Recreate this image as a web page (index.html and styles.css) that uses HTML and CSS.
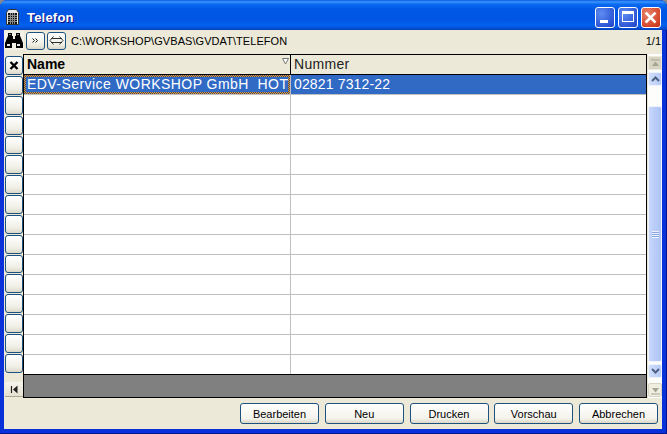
FILE: index.html
```html
<!DOCTYPE html>
<html lang="de">
<head>
<meta charset="utf-8">
<title>Telefon</title>
<link rel="stylesheet" href="styles.css">
</head>
<body>
<div class="window">
  <header class="titlebar">
    <svg class="app-icon" width="13" height="16" viewBox="0 0 13 16"><path d="M0.500 3.500L2.500 0.500h8l2 3v12h-12z" fill="#e8e8e8" stroke="#333"/><rect x="2" y="4" width="9" height="11" fill="#111"/><path d="M4.500 4v11M6.500 4v11M8.500 4v11M2 6.500h9M2 8.500h9M2 10.500h9M2 12.500h9" stroke="#8a8a8a"/></svg>
    <span class="title">Telefon</span>
    <div class="caption-buttons">
      <div class="cap cap-blue cap-min"><span class="min-glyph"></span></div>
      <div class="cap cap-blue"><span class="max-glyph"></span></div>
      <div class="cap cap-red"><svg width="20" height="20" viewBox="0 0 20 20"><path d="M5 5l9 9M14 5l-9 9" stroke="#fff" stroke-width="2.800" stroke-linecap="square"/></svg></div>
    </div>
  </header>
  <div class="client">
    <div class="toolbar">
      <div class="find-btn"><svg width="18" height="15" viewBox="0 0 18 15"><path d="M3 0h4v3h1v3h2V3h1V0h4v3l1 2 2 5v5h-7v-5H7v5H0v-5l2-5 1-2z" fill="#000"/><rect x="2" y="11" width="3" height="2" fill="#e8e8e8"/><rect x="12" y="11" width="3" height="2" fill="#e8e8e8"/><rect x="4" y="1" width="2" height="1" fill="#888"/><rect x="12" y="1" width="2" height="1" fill="#888"/></svg></div>
      <div class="tool-btn"><svg width="9" height="9" viewBox="0 0 9 9"><path d="M1.500 2.500l2 2-2 2M4.500 2.500l2 2-2 2" fill="none" stroke="#111"/></svg></div>
      <div class="tool-btn"><svg width="15" height="11" viewBox="0 0 15 11"><path d="M2 3.500h11M2 7.500h11M4.500 1.500L1 5.500l3.500 4M10.500 1.500L14 5.500l-3.500 4" fill="none" stroke="#333"/></svg></div>
      <span class="path">C:\WORKSHOP\GVBAS\GVDAT\TELEFON</span>
      <span class="count">1/1</span>
    </div>
    <div class="main">
      <div class="selectors">
        <div class="sel"><svg width="16" height="17" viewBox="0 0 16 17"><path d="M4.500 5l7 7M11.500 5l-7 7" stroke="#000" stroke-width="2.400"/></svg></div>
        <div class="sel"></div><div class="sel"></div><div class="sel"></div><div class="sel"></div>
        <div class="sel"></div><div class="sel"></div><div class="sel"></div><div class="sel"></div>
        <div class="sel"></div><div class="sel"></div><div class="sel"></div><div class="sel"></div>
        <div class="sel"></div><div class="sel"></div><div class="sel"></div>
        <div class="first-btn"><svg width="9" height="9" viewBox="0 0 9 9"><path d="M1.500 1v7" stroke="#222" stroke-width="1.200"/><path d="M7.500 0.500v8L3 4.500z" fill="#222"/></svg></div>
      </div>
      <div class="grid">
        <div class="grid-head">
          <div class="head-name">Name<svg class="sort" width="7" height="7" viewBox="0 0 7 7"><path d="M0.500 0.500h6L3.500 6z" fill="#fff" stroke="#777"/></svg></div>
          <div class="head-num">Nummer</div>
        </div>
        <div class="row row-sel"><div class="cell-name"><div class="focus"><div class="focus-inner">EDV-Service WORKSHOP GmbH&nbsp; HOT</div></div></div><div class="cell-num">02821 7312-22</div></div>
        <div class="row"><div class="cell-name"></div><div class="cell-num"></div></div>
        <div class="row"><div class="cell-name"></div><div class="cell-num"></div></div>
        <div class="row"><div class="cell-name"></div><div class="cell-num"></div></div>
        <div class="row"><div class="cell-name"></div><div class="cell-num"></div></div>
        <div class="row"><div class="cell-name"></div><div class="cell-num"></div></div>
        <div class="row"><div class="cell-name"></div><div class="cell-num"></div></div>
        <div class="row"><div class="cell-name"></div><div class="cell-num"></div></div>
        <div class="row"><div class="cell-name"></div><div class="cell-num"></div></div>
        <div class="row"><div class="cell-name"></div><div class="cell-num"></div></div>
        <div class="row"><div class="cell-name"></div><div class="cell-num"></div></div>
        <div class="row"><div class="cell-name"></div><div class="cell-num"></div></div>
        <div class="row"><div class="cell-name"></div><div class="cell-num"></div></div>
        <div class="row"><div class="cell-name"></div><div class="cell-num"></div></div>
        <div class="row row-last"><div class="cell-name"></div><div class="cell-num"></div></div>
        <div class="grid-empty"></div>
      </div>
      <div class="scrollbar">
        <div class="sb-end"><svg width="9" height="9" viewBox="0 0 9 9"><path d="M0 1h9" stroke="#a5a593"/><path d="M4.500 2.500L8 7H1z" fill="#a5a593"/></svg></div>
        <div class="sb-arrow"><svg width="9" height="6" viewBox="0 0 9 6"><path d="M1 5l3.500-3.500L8 5" fill="none" stroke="#4d6185" stroke-width="2"/></svg></div>
        <div class="sb-gap"></div>
        <div class="sb-thumb"><span class="grip"></span></div>
        <div class="sb-arrow"><svg width="9" height="6" viewBox="0 0 9 6"><path d="M1 1l3.500 3.500L8 1" fill="none" stroke="#4d6185" stroke-width="2"/></svg></div>
        <div class="sb-end sb-end-low"><svg width="9" height="9" viewBox="0 0 9 9"><path d="M4.500 6.500L8 2H1z" fill="#a5a593"/><path d="M0 8h9" stroke="#a5a593"/></svg></div>
      </div>
    </div>
    <footer class="footer">
      <button class="btn">Bearbeiten</button>
      <button class="btn">Neu</button>
      <button class="btn">Drucken</button>
      <button class="btn">Vorschau</button>
      <button class="btn">Abbrechen</button>
    </footer>
  </div>
</div>
</body>
</html>
```

FILE: styles.css
```css
* { box-sizing: border-box; }
html, body { margin: 0; padding: 0; }
body {
  width: 667px;
  height: 434px;
  overflow: hidden;
  background: #8a8a8a;
  font-family: "Liberation Sans", Arial, sans-serif;
}
.window {
  width: 667px;
  height: 434px;
  display: flex;
  flex-direction: column;
  background: #0831d9;
  padding: 0 5px 5px 4px;
  border-radius: 7px 7px 0 0;
  box-shadow: inset -1px -1px 0 #00138c;
}
.titlebar {
  flex: 0 0 30px;
  margin: 0 -5px 0 -4px;
  padding: 4px 6px 0 6px;
  display: flex;
  align-items: center;
  border-radius: 7px 7px 0 0;
  background: linear-gradient(180deg, #0a5ce0 0, #3d95ff 2px, #0a6cf0 4px, #0058e6 9px, #0055e5 20px, #0262ee 25px, #0551d8 28px, #013fb5 30px);
}
.app-icon { margin-right: 8px; flex: none; }
.title {
  color: #fff;
  font-weight: 700;
  font-size: 13px;
  text-shadow: 1px 1px 0 #0f1089;
  letter-spacing: 0.2px;
}
.caption-buttons { margin-left: auto; display: flex; gap: 3px; }
.cap {
  width: 20px;
  height: 21px;
  border: 1px solid #fff;
  border-radius: 3px;
  display: flex;
}
.cap-min { margin-right: 0; }
.cap-blue { background: radial-gradient(circle at 30% 30%, #5f8cf0, #2a53d4 75%, #2043be); }
.cap-red { background: radial-gradient(circle at 30% 30%, #e8846a, #d5462a 70%, #b5321c); }
.min-glyph { width: 8px; height: 3px; background: #fff; margin: 12px 0 0 4px; }
.max-glyph { width: 12px; height: 11px; border: 1px solid #fff; border-top-width: 3px; margin: 3px 0 0 3px; }
.client {
  flex: 1;
  background: #ece9d8;
  display: flex;
  flex-direction: column;
  min-height: 0;
}
.toolbar {
  flex: 0 0 24px;
  display: flex;
  align-items: center;
  padding-bottom: 3px;
  font-size: 11px;
  color: #000;
}
.find-btn {
  width: 20px;
  height: 19px;
  margin-right: 2px;
  display: flex;
  align-items: center;
  justify-content: center;
  background: #f3f1e6;
}
.tool-btn {
  width: 19px;
  height: 18px;
  margin-right: 2px;
  border: 1px solid #1c5180;
  border-radius: 3px;
  background: linear-gradient(180deg, #fff, #f0efe6 70%, #dcd8c8);
  display: flex;
  align-items: center;
  justify-content: center;
}
.path { margin-left: 3px; letter-spacing: 0.06px; }
.count { margin-left: auto; margin-right: 1px; }
.main { flex: 0 0 344px; display: flex; }
.selectors { flex: 0 0 19px; display: flex; flex-direction: column; padding: 2px 0 1px 1px; }
.sel {
  flex: 0 0 18.85px;
  width: 18px;
  margin-bottom: 1px;
  border: 1px solid #1c5180;
  border-radius: 3px;
  background: linear-gradient(180deg, #fff, #f0efe6 70%, #dcd8c8);
  display: flex;
}
.first-btn {
  width: 18px;
  height: 15px;
  margin-top: auto;
  background: linear-gradient(180deg, #f6f5ee, #e4e1d0);
  border-bottom: 1px solid #aca899;
  display: flex;
  align-items: center;
  justify-content: center;
}
.grid {
  flex: 0 0 624px;
  border: 1px solid #000;
  display: flex;
  flex-direction: column;
  background: #808080;
}
.grid-head { flex: 0 0 20px; display: flex; background: #ece9d8; border-bottom: 1px solid #000; font-size: 14px; line-height: 19px; }
.head-name {
  flex: 0 0 267px;
  padding-left: 3px;
  font-weight: 700;
  border-right: 1px solid #000;
  position: relative;
}
.sort { position: absolute; right: 1px; top: 3px; }
.head-num { padding-left: 3px; flex: 1; color: #222; letter-spacing: 0.3px; }
.row { flex: 0 0 20px; display: flex; background: #fff; border-bottom: 1px solid #c0c0c0; font-size: 14px; line-height: 19px; }
.row-last { border-bottom-color: #000; }
.row-sel { background: #316ac5; color: #fff; }
.cell-name { flex: 0 0 267px; border-right: 1px solid #c0c0c0; overflow: hidden; white-space: nowrap; }
.focus {
  height: 19px;
  width: 266px;
  padding: 2px;
  background: repeating-conic-gradient(#f09a30 0 25%, #3a4a6a 0 50%) 0 0 / 2px 2px;
}
.focus-inner {
  height: 15px;
  padding-left: 1px;
  background: #316ac5;
  line-height: 15px;
  letter-spacing: 0.45px;
  overflow: hidden;
}
.cell-num { flex: 1; padding-left: 3px; letter-spacing: 0.15px; }
.grid-empty { flex: 1; background: #808080; }
.scrollbar { flex: 0 0 14px; margin-left: 1px; display: flex; flex-direction: column; background: #fdfdfb; padding-bottom: 1px; }
.sb-end {
  flex: 0 0 14px;
  margin-top: 2px;
  background: #d8d4c4;
  border: 1px solid #ece9d8;
  display: flex;
  align-items: center;
  justify-content: center;
}
.sb-end-low { margin-top: 5px; background: #f0eee0; border: 1px solid #d8d4c4; border-radius: 2px; }
.sb-arrow {
  flex: 0 0 14px;
  margin-top: 2px;
  background: linear-gradient(90deg, #d2defb, #b7cbf7);
  border: 1px solid #eef2fd;
  border-radius: 2px;
  display: flex;
  align-items: center;
  justify-content: center;
}
.sb-gap { flex: 0 0 20px; }
.sb-thumb {
  flex: 1;
  background: linear-gradient(90deg, #c9d8fb, #b9ccf8 50%, #aec3f5);
  border: 1px solid #eef2fd;
  border-radius: 2px;
  display: flex;
  align-items: center;
  justify-content: center;
}
.grip {
  width: 7px;
  height: 7px;
  background: repeating-linear-gradient(180deg, #eef2fd 0, #eef2fd 1px, #8aa5e4 1px, #8aa5e4 2px);
}
.footer {
  flex: 1;
  display: flex;
  justify-content: flex-end;
  align-items: flex-start;
  gap: 5.75px;
  padding: 5px 4px 0 0;
}
.btn {
  width: 79px;
  height: 21px;
  padding: 0;
  border: 1px solid #1c5180;
  border-radius: 3px;
  background: linear-gradient(180deg, #fff, #f4f3ec 75%, #dcd8c8);
  font-family: "Liberation Sans", Arial, sans-serif;
  font-size: 11px;
  color: #000;
}
```
